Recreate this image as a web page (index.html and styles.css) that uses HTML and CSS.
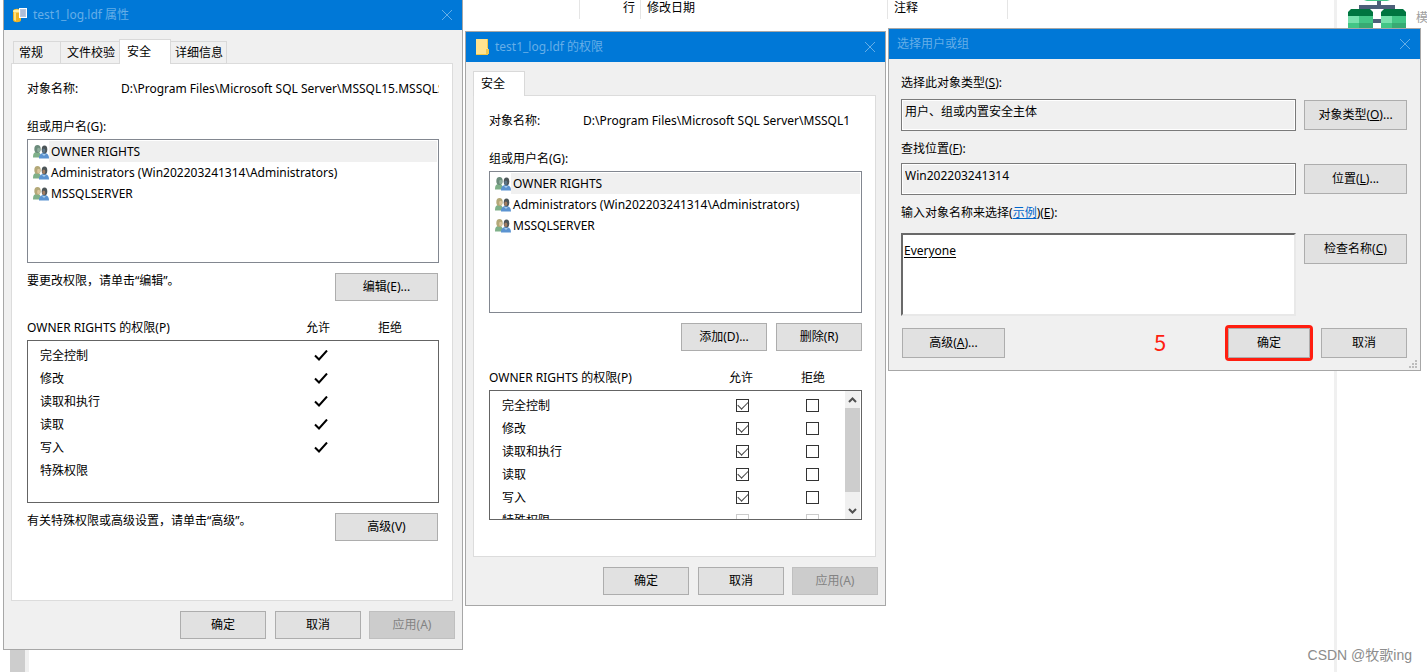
FILE: index.html
```html
<!DOCTYPE html>
<html lang="zh-CN">
<head>
<meta charset="utf-8">
<title>test1_log.ldf 权限</title>
<link rel="stylesheet" href="styles.css">
</head>
<body>
<svg class="defs" aria-hidden="true">
  <symbol id="close" viewBox="0 0 12 12"><path d="M1 1l10 10M11 1L1 11" fill="none" stroke="currentColor"/></symbol>
  <symbol id="tick" viewBox="0 0 16 12"><path d="M2 5.500l4 4L14 0.500" fill="none" stroke="#000" stroke-width="2"/></symbol>
  <symbol id="users" viewBox="0 0 16 14">
    <path d="M0 12.500c0-4 1-5.500 4-5.500s4 2 4 5.500z" fill="#7fb089"/>
    <path d="M6 13.500c0-4 2-5.500 5-5.500s5 1.500 5 5.500z" fill="#5b93d1"/>
    <path d="M9 9l2 2 2-2z" fill="#a9cdea"/>
    <ellipse cx="4.500" cy="4" rx="3.200" ry="4" class="hair"/>
    <ellipse cx="5.600" cy="5" rx="1.500" ry="2.200" class="face"/>
    <ellipse cx="11.500" cy="4.500" rx="2.800" ry="3.900" fill="#4c5558"/>
    <ellipse cx="10.800" cy="5.700" rx="1.500" ry="2.200" class="face2"/>
  </symbol>
</svg>

<div class="desktop">
  <main class="workspace">
    <div class="columns">
      <span class="col col-rows">行</span>
      <span class="col col-date">修改日期</span>
      <span class="col col-note">注释</span>
    </div>
    <div class="left-scroll"></div>
  </main>
  <aside class="side">
    <svg class="model-icon" width="58" height="36" viewBox="0 0 58 36" aria-hidden="true">
      <path d="M31 0v6M11 7h36M24 21h10" stroke="#4d6079" stroke-width="4"/>
      <path d="M16 0h26l-3 1H19z" fill="#42c586"/>
      <path d="M3 9h19l3 3v4H0v-4z" fill="#007540"/><path d="M36 9h19l3 3v4H33v-4z" fill="#007540"/>
      <path d="M0 16h25v14H0z" fill="#42c586"/><path d="M33 16h25v14H33z" fill="#42c586"/>
      <path d="M0 16h11v7H0zM33 16h11v7H33z" fill="#78e1ae"/>
      <path d="M11 23h14v7H11zM44 23h14v7H44z" fill="#38aa73"/>
    </svg>
    <span>模</span>
  </aside>

  <section class="window props">
    <header class="titlebar">
      <svg width="14" height="15" viewBox="0 0 14 15" aria-hidden="true">
        <path d="M0 3c0-3 8-3 8 0v9c0 3-8 3-8 0z" fill="#f0b323"/><path d="M1 4v8l2 1V5z" fill="#ffe27a"/><ellipse cx="4" cy="3" rx="4" ry="1.600" fill="#fff0a8"/>
        <path d="M6 0h8v10H6z" fill="#fff"/><path d="M7 1h6v8H7z" fill="#b9c7df"/><path d="M8 3h4M8 5h4M8 7h4" stroke="#a3b3d0"/>
      </svg>
      <h2>test1_log.ldf 属性</h2>
      <button class="close" aria-label="关闭"><svg width="12" height="12"><use href="#close"/></svg></button>
    </header>
    <div class="window-body">
      <nav class="tabs">
        <button class="tab">常规</button><button class="tab tab-wide">文件校验</button><button class="tab active">安全</button><button class="tab tab-wide">详细信息</button>
      </nav>
      <div class="panel">
        <div class="object"><label for="path1">对象名称:</label><input id="path1" readonly value="D:\Program Files\Microsoft SQL Server\MSSQL15.MSSQLSERVER\MSSQL\DATA\test1_log.ldf"></div>
        <p class="caption">组或用户名(G):</p>
        <ul class="users">
          <li class="owner"><svg width="16" height="14"><use href="#users"/></svg><span>OWNER RIGHTS</span></li>
          <li><svg width="16" height="14"><use href="#users"/></svg><span>Administrators (Win202203241314\Administrators)</span></li>
          <li><svg width="16" height="14"><use href="#users"/></svg><span>MSSQLSERVER</span></li>
        </ul>
        <div class="hint"><p>要更改权限，请单击“编辑”。</p><button class="btn wide">编辑(E)...</button></div>
        <div class="perm-head"><span>OWNER RIGHTS 的权限(P)</span><span>允许</span><span>拒绝</span></div>
        <div class="perm-box">
          <table class="perms">
            <tr><td>完全控制</td><td><svg width="16" height="12"><use href="#tick"/></svg></td><td></td></tr>
            <tr><td>修改</td><td><svg width="16" height="12"><use href="#tick"/></svg></td><td></td></tr>
            <tr><td>读取和执行</td><td><svg width="16" height="12"><use href="#tick"/></svg></td><td></td></tr>
            <tr><td>读取</td><td><svg width="16" height="12"><use href="#tick"/></svg></td><td></td></tr>
            <tr><td>写入</td><td><svg width="16" height="12"><use href="#tick"/></svg></td><td></td></tr>
            <tr><td>特殊权限</td><td></td><td></td></tr>
          </table>
        </div>
        <div class="hint"><p>有关特殊权限或高级设置，请单击“高级”。</p><button class="btn wide">高级(V)</button></div>
      </div>
      <footer class="actions"><button class="btn">确定</button><button class="btn">取消</button><button class="btn" disabled>应用(A)</button></footer>
    </div>
  </section>

  <section class="window permissions">
    <header class="titlebar">
      <svg width="14" height="17" viewBox="0 0 14 17" aria-hidden="true"><path d="M1 0h12v16H1z" fill="#ffe38f"/><path d="M1 15h12v1H1zM12 0h1v9h-1z" fill="#f2c846"/><path d="M11 10h3v5h-3z" fill="#f0c850"/></svg>
      <h2>test1_log.ldf 的权限</h2>
      <button class="close" aria-label="关闭"><svg width="12" height="12"><use href="#close"/></svg></button>
    </header>
    <div class="window-body">
      <nav class="tabs"><button class="tab active">安全</button></nav>
      <div class="panel">
        <div class="object"><label for="path2">对象名称:</label><input id="path2" readonly value="D:\Program Files\Microsoft SQL Server\MSSQL1"></div>
        <p class="caption">组或用户名(G):</p>
        <ul class="users">
          <li class="owner"><svg width="16" height="14"><use href="#users"/></svg><span>OWNER RIGHTS</span></li>
          <li><svg width="16" height="14"><use href="#users"/></svg><span>Administrators (Win202203241314\Administrators)</span></li>
          <li><svg width="16" height="14"><use href="#users"/></svg><span>MSSQLSERVER</span></li>
        </ul>
        <div class="edit-row"><button class="btn">添加(D)...</button><button class="btn">删除(R)</button></div>
        <div class="perm-head"><span>OWNER RIGHTS 的权限(P)</span><span>允许</span><span>拒绝</span></div>
        <div class="perm-box">
          <table class="perms">
            <tr><td>完全控制</td><td><input type="checkbox" aria-label="允许完全控制" checked></td><td><input type="checkbox" aria-label="拒绝完全控制"></td></tr>
            <tr><td>修改</td><td><input type="checkbox" aria-label="允许修改" checked></td><td><input type="checkbox" aria-label="拒绝修改"></td></tr>
            <tr><td>读取和执行</td><td><input type="checkbox" aria-label="允许读取和执行" checked></td><td><input type="checkbox" aria-label="拒绝读取和执行"></td></tr>
            <tr><td>读取</td><td><input type="checkbox" aria-label="允许读取" checked></td><td><input type="checkbox" aria-label="拒绝读取"></td></tr>
            <tr><td>写入</td><td><input type="checkbox" aria-label="允许写入" checked></td><td><input type="checkbox" aria-label="拒绝写入"></td></tr>
            <tr><td>特殊权限</td><td><input type="checkbox" aria-label="允许特殊权限" disabled></td><td><input type="checkbox" aria-label="拒绝特殊权限" disabled></td></tr>
          </table>
          <div class="scrollbar">
            <button aria-label="向上"><svg width="9" height="6"><path d="M1 5l3.500-3.500L8 5" fill="none" stroke="#505050" stroke-width="2"/></svg></button>
            <div class="thumb"></div>
            <button aria-label="向下"><svg width="9" height="6"><path d="M1 1l3.500 3.500L8 1" fill="none" stroke="#505050" stroke-width="2"/></svg></button>
          </div>
        </div>
      </div>
      <footer class="actions"><button class="btn">确定</button><button class="btn">取消</button><button class="btn" disabled>应用(A)</button></footer>
    </div>
  </section>

  <section class="window picker">
    <header class="titlebar">
      <h2>选择用户或组</h2>
      <button class="close" aria-label="关闭"><svg width="12" height="12"><use href="#close"/></svg></button>
    </header>
    <form class="form">
      <label for="type">选择此对象类型(<u>S</u>):</label>
      <input id="type" class="field" readonly value="用户、组或内置安全主体"><button type="button" class="btn">对象类型(<u>O</u>)...</button>
      <label for="place">查找位置(<u>F</u>):</label>
      <input id="place" class="field" readonly value="Win202203241314"><button type="button" class="btn">位置(<u>L</u>)...</button>
      <div class="label"><label for="names">输入对象名称来选择</label>(<a href="#names">示例</a>)(<u>E</u>):</div>
      <textarea id="names" class="names" spellcheck="false">Everyone</textarea><button type="button" class="btn">检查名称(<u>C</u>)</button>
      <div class="picker-actions">
        <button type="button" class="btn wide">高级(<u>A</u>)...</button>
        <span class="step">5</span>
        <button type="button" class="btn marked">确定</button>
        <button type="button" class="btn">取消</button>
      </div>
    </form>
    <svg class="grip" width="8" height="8" aria-hidden="true"><path d="M6 0h2v2H6zM3 3h2v2H3zM6 3h2v2H6zM0 6h2v2H0zM3 6h2v2H3zM6 6h2v2H6z" fill="#bdbdbd"/></svg>
  </section>
  <div class="watermark">CSDN @牧歌ing</div>
</div>
</body>
</html>
```
FILE: styles.css
```css
* { box-sizing: border-box; }
body {
  margin: 0;
  background: #fff;
  color: #000;
  font: 12px/16px "Noto Sans", "Noto Sans CJK SC", sans-serif;
}
h2, p, ul { margin: 0; padding: 0; font: inherit; }
button, input, textarea { font: inherit; color: inherit; }
.defs { position: absolute; width: 0; height: 0; }
.desktop { position: relative; display: flex; height: 100vh; overflow: hidden; }

/* Background application */
.workspace { flex: 1; display: flex; flex-direction: column; justify-content: space-between; }
.columns { display: flex; height: 19px; padding-left: 579px; }
.col { border-left: 1px solid #e5e5e5; padding-left: 6px; }
.col-rows { width: 61px; padding-right: 5px; text-align: right; }
.col-date { width: 247px; }
.col-note { width: 121px; border-right: 1px solid #e5e5e5; }
.left-scroll { width: 19px; height: 24px; margin-left: 10px; background: #cdcdcd; border-right: 4px solid #f0f0f0; }
.side { display: flex; gap: 10px; width: 93px; padding-left: 11px; border-left: 3px solid #f0f0f0; color: #a0a0a0; line-height: 36px; white-space: nowrap; overflow: hidden; }
.model-icon { flex: none; }

/* Windows */
.window { position: absolute; display: flex; flex-direction: column; background: #f0f0f0; border: 1px solid #a7a7a7; }
.props { left: 3px; top: -1px; width: 460px; height: 651px; }
.permissions { left: 465px; top: 31px; width: 421px; height: 575px; }
.picker { left: 888px; top: 28px; width: 533px; height: 343px; }
.titlebar { display: flex; align-items: center; gap: 6px; height: 30px; padding: 0 9px; background: #0078d7; color: #66aee7; flex: none; }
.picker .titlebar { padding-left: 8px; }
.titlebar h2 { flex: 1; }
.close { display: flex; padding: 0; border: 0; background: none; }
.window-body { flex: 1; display: flex; flex-direction: column; padding: 9px 9px 10px 7px; min-height: 0; }
.tabs { display: flex; align-items: flex-end; height: 25px; margin-bottom: -1px; z-index: 1; }
.props .tabs { padding-left: 2px; }
.tab { width: 48px; height: 23px; padding: 0 0 0 5px; border: 1px solid #d9d9d9; margin-right: -1px; background: #f0f0f0; text-align: left; white-space: nowrap; }
.tab-wide { width: 60px; padding-left: 6px; }
.tab-wide:last-child { width: 57px; padding-left: 4px; }
.tab.active { width: 52px; height: 25px; padding-left: 7px; background: #fff; border-bottom: 0; }
.panel { flex: 1; display: flex; flex-direction: column; padding: 17px 13px 14px 15px; background: #fff; border: 1px solid #dcdcdc; min-height: 0; }
.object { display: flex; margin-bottom: 22px; }
.object label { width: 94px; }
.object input { flex: 1; min-width: 0; height: 16px; padding: 0; border: 0; outline: 0; background: none; }
.caption { margin-bottom: 4px; }
.users { --hair: #b3a878; --face: #dcc79f; --face2: #a37d62; height: 124px; padding: 1px; border: 1px solid #828790; list-style: none; flex: none; }
.permissions .users { height: 142px; }
.users li { display: flex; align-items: center; height: 21px; padding-left: 4px; }
.users span { flex: 1; padding-left: 2px; line-height: 21px; }
.users .owner { --hair: #6c8c7c; --face: #8fae9d; --face2: #5c7688; }
.owner span { background: #f0f0f0; }
.hair { fill: var(--hair); }
.face { fill: var(--face); }
.face2 { fill: var(--face2); }
.hint { display: flex; justify-content: space-between; padding: 10px 1px 0 0; height: 57px; }
.btn { width: 86px; height: 28px; padding: 0; border: 1px solid #adadad; background: #e1e1e1; flex: none; }
.btn.wide { width: 103px; }
.btn:disabled { background: #ccc; border-color: #bfbfbf; color: #838383; }
.perm-head { display: grid; grid-template-columns: 1fr 24px 24px; column-gap: 48px; padding: 0 37px 4px 0; }
.perm-box { display: flex; height: 163px; border: 1px solid #646464; overflow: hidden; flex: none; }
.permissions .perm-box { height: 130px; }
.perms { flex: 1; border-collapse: collapse; margin-top: 3px; table-layout: fixed; width: 100%; height: 138px; }
.perms td { height: 23px; padding: 0; }
.perms td:first-child { padding-left: 12px; }
.perms td:nth-child(2) { width: 70px; }
.perms td:last-child { width: 82px; }
.perms svg { display: block; margin: 0 auto; }
.edit-row { display: flex; justify-content: flex-end; gap: 9px; padding: 10px 0 19px; }
.permissions .perms td:last-child { width: 39px; }
.perms input { appearance: none; display: block; width: 13px; height: 13px; margin: 0; border: 1px solid #333; background: #fff; }
.perms input:disabled { border-color: #ccc; }
.perms input:checked::after { content: ""; display: block; width: 9px; height: 5px; margin: 1px; border: solid #444; border-width: 0 0 1px 1px; transform: rotate(-45deg); }
.scrollbar { display: flex; flex-direction: column; align-items: center; width: 15px; margin-right: 1px; background: #f0f0f0; }
.scrollbar button { display: grid; place-items: center; width: 15px; height: 17px; padding: 0; border: 0; background: none; }
.thumb { width: 15px; height: 84px; margin-bottom: auto; background: #cdcdcd; }
.actions { display: flex; justify-content: flex-end; gap: 8px; padding-top: 10px; margin-right: -2px; }
.actions .btn:first-child { margin-right: 1px; }

/* Object picker */
.form { display: grid; grid-template-columns: 1fr 103px; column-gap: 8px; padding: 16px 13px 12px 12px; }
.form > label, .label { grid-column: 1 / -1; height: 24px; }
.form > .btn { height: 30px; margin-top: 1px; }
.form .btn { width: auto; }
.field { width: 100%; height: 32px; margin-bottom: 10px; padding: 0 3px 8px; border: 1px solid #7a7a7a; outline: 1px solid #fff; outline-offset: -2px; background: #f0f0f0; }
.form > .field ~ label { height: 22px; }
.names { height: 83px; margin: 3px 0 12px; padding: 8px 1px; border: 2px solid; border-color: #696969 #e8e8e8 #e8e8e8 #696969; outline: 0; resize: none; text-decoration: underline; text-underline-offset: 2px; }
.form > .names + .btn { margin-top: 4px; }
.form > .label { height: 25px; }
.form a { color: #0066cc; }
u { text-underline-offset: 1px; }
.picker-actions { grid-column: 1 / -1; display: flex; align-items: center; gap: 11px; padding-left: 1px; }
.picker-actions .btn { width: 86px; height: 30px; }
.picker-actions .btn.wide { width: 103px; }
.picker-actions .marked { width: 82px; margin-left: auto; outline: 3px solid #ff1e10; border-radius: 1px; }
.step { margin-left: 138px; color: #ff1e10; font: 22px/20px "Noto Sans CJK SC", sans-serif; padding-bottom: 4px; }
.grip { position: absolute; right: 3px; bottom: 2px; }
.watermark { position: absolute; right: 15px; bottom: 7px; color: #8c8c8c; font: 14px/20px "Liberation Sans", "Noto Sans CJK SC", sans-serif; }
```
